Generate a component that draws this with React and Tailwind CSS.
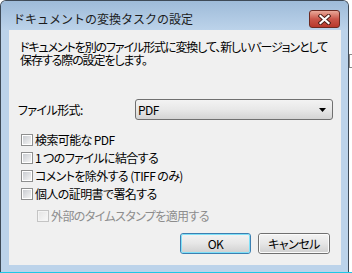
import React from 'react';

const jp = { fontFeatureSettings: '"palt"' };

const Checkbox = ({ label, disabled }) => (
  <div className="flex items-center h-[18px]">
    <div
      className={`w-[12px] h-[12px] border flex items-center justify-center ${
        disabled ? 'border-[#c4c4c4] bg-[#f4f4f4]' : 'border-[#8e8f8f] bg-white'
      }`}
    >
      <div
        className={`w-[8px] h-[8px] ${
          disabled
            ? 'bg-gradient-to-br from-[#e6e6e6] to-[#f7f7f7]'
            : 'bg-gradient-to-br from-[#c9ccd1] to-[#f4f4f4]'
        }`}
      />
    </div>
    <span
      className={`ml-[2px] text-[12px] leading-[14px] tracking-[-0.6px] whitespace-nowrap ${
        disabled ? 'text-[#8d8d8d]' : 'text-black'
      }`}
    >
      {label}
    </span>
  </div>
);

const WinButton = ({ children, primary }) => (
  <div
    className={`h-[21px] rounded-[3px] border flex items-center justify-center ${
      primary ? 'w-[71px] border-[#3c7fb1]' : 'w-[72px] border-[#707070]'
    }`}
  >
    <div
      className={`w-full h-full rounded-[2px] border flex items-center justify-center bg-gradient-to-b from-[#f2f2f2] via-[#e6e6e6] to-[#d2d2d2] ${
        primary ? 'border-[#7fe0f8]' : 'border-[#fbfbfb]'
      }`}
    >
      <span className="text-[12px] leading-[14px] tracking-[-0.5px] text-black">{children}</span>
    </div>
  </div>
);

export default function App() {
  return (
    <div
      className="w-[352px] h-[273px] bg-white flex flex-col overflow-hidden"
      style={{ fontFamily: '"Noto Sans CJK JP", "Liberation Sans", sans-serif' }}
    >
      <div className="flex h-[272px]">
        {/* window */}
        <div className="w-[349px] h-[272px] border-l border-t border-r border-[#3e4a57] rounded-t-[6px] bg-[#bcd3ea] flex flex-col">
          {/* title bar */}
          <div className="h-[29px] flex items-end pb-[2px] pl-[12px] pr-[8px] rounded-t-[5px] bg-gradient-to-b from-[#9ebbd9] to-[#bcd3ea]">
            <span className="flex-1 text-[12px] leading-[17px] text-[#1c1c1c] mb-[1px]">
              ドキュメントの変換タスクの設定
            </span>
            <div className="w-[31px] h-[18px] rounded-[3px] border border-[#6b2a22] bg-gradient-to-b from-[#e9a99a] via-[#c9564a] to-[#b8382c] flex items-center justify-center">
              <svg width="13" height="11" viewBox="0 0 13 11">
                <path d="M2.5 2 L10.5 9 M10.5 2 L2.5 9" stroke="#4a1d16" strokeWidth="4" strokeLinecap="square" />
                <path d="M2.5 2 L10.5 9 M10.5 2 L2.5 9" stroke="#ffffff" strokeWidth="2.2" strokeLinecap="square" />
              </svg>
            </div>
          </div>

          {/* client */}
          <div className="flex-1 flex pl-[8px] pr-[7px] pb-[7px]">
            <div className="flex-1 bg-[#f0f0f0] flex flex-col" style={jp}>
              <div className="pt-[10px] pl-[11px] text-[12px] leading-[13px] tracking-[-1.1px] text-black whitespace-nowrap">
                <div>ドキュメントを別のファイル形式に変換して、新しいバージョンとして</div>
                <div>保存する際の設定をします。</div>
              </div>

              <div className="mt-[33px] flex items-center pl-[9px]">
                <span className="w-[117px] text-[12px] leading-[14px] tracking-[-0.6px] text-black">ファイル形式:</span>
                <div className="w-[198px] h-[21px] rounded-[3px] border border-[#707070] bg-gradient-to-b from-[#f3f3f3] via-[#e8e8e8] to-[#d4d4d4] flex items-center pl-[2px] pr-[6px]">
                  <span className="flex-1 text-[12px] leading-[14px] tracking-[-0.5px] text-black">PDF</span>
                  <svg width="7" height="4" viewBox="0 0 7 4">
                    <path d="M0 0 H7 L3.5 4 Z" fill="#000" />
                  </svg>
                </div>
              </div>

              <div className="mt-[11px] pl-[12px] flex flex-col">
                <Checkbox label="検索可能な PDF" />
                <Checkbox label="1 つのファイルに結合する" />
                <Checkbox label="コメントを除外する (TIFF のみ)" />
                <Checkbox label="個人の証明書で署名する" />
                <div className="pl-[16px] mt-[4px]">
                  <Checkbox label="外部のタイムスタンプを適用する" disabled />
                </div>
              </div>

              <div className="mt-[8px] flex justify-end gap-[7px] pr-[11px]">
                <WinButton primary>OK</WinButton>
                <WinButton>キャンセル</WinButton>
              </div>
            </div>
          </div>
        </div>

        {/* right strip behind window */}
        <div className="flex-1 pt-[54px]">
          <div className="h-[14px] border-l border-t border-b border-[#8a8a8a] bg-white" />
        </div>
      </div>
      <div className="h-[1px] bg-[#1ec8e6]" />
    </div>
  );
}
